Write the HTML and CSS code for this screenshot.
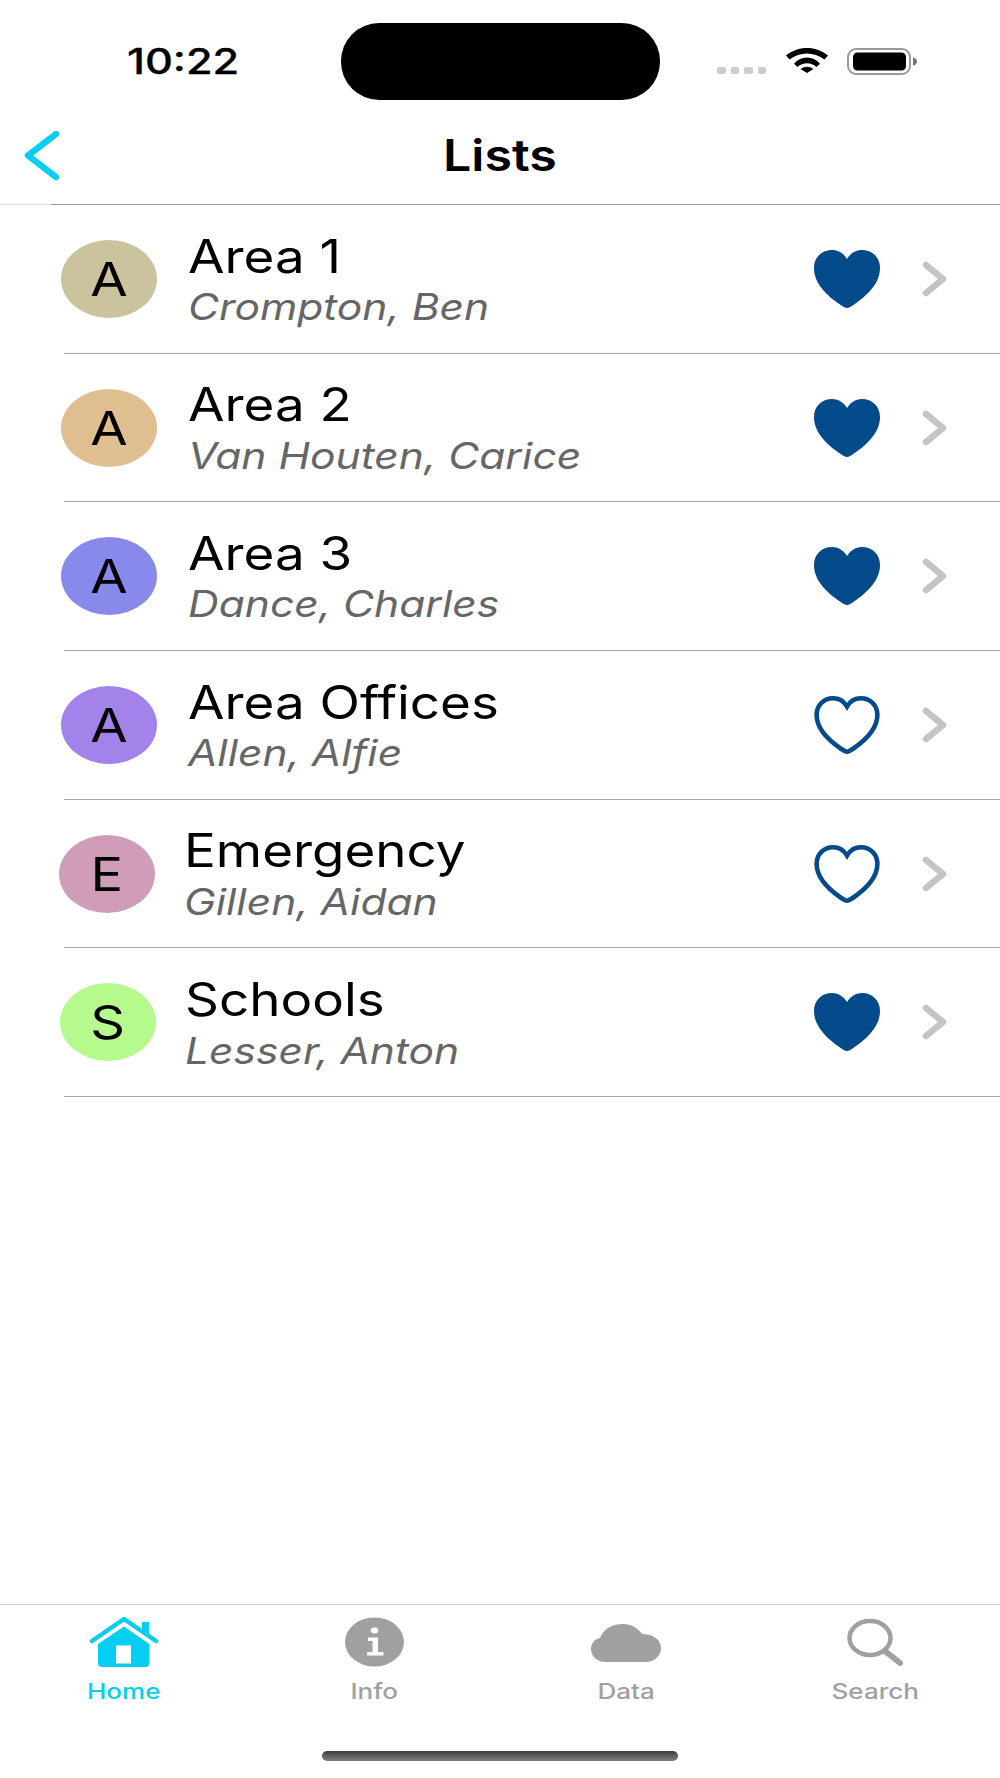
FILE: index.html
```html
<!DOCTYPE html>
<html lang="en">
<head>
<meta charset="utf-8">
<title>Lists</title>
<link rel="stylesheet" href="styles.css">
</head>
<body>
<div class="phone">
  <header class="status">
    <span class="time">10:22</span>
    <div class="island"></div>
    <div class="dots"><i></i><i></i><i></i><i></i></div>
    <svg class="wifi" width="42" height="25" viewBox="0 0 42 25"><path d="M0 7.6C12-2.5 30-2.5 42 7.6L38.5 11.5C28 3.5 14 3.5 3.5 11.5Z"/><path d="M8 15.7C15 7.5 27 7.5 34 15.7L30.5 19C25 14 17 14 11.5 19Z"/><path d="M14.5 21Q21 16.5 27.5 21L21 25Z"/></svg>
    <svg class="battery" width="71" height="27" viewBox="0 0 71 27"><rect x="1" y="1" width="62" height="25" rx="8" fill="#fff" stroke="#9a9a9a" stroke-width="2"/><rect x="6" y="4.5" width="53" height="18" rx="4.5"/><path d="M66 9.5C69 10 70 12 70 13.5C70 15 69 17 66 17.5Z" fill="#777"/></svg>
  </header>
  <nav class="nav">
    <svg class="back" width="36" height="50" viewBox="0 0 36 50"><path d="M32 3L4 24.500L32 46"/></svg>
    <h1 class="nav-title"><span>Lists</span></h1>
  </nav>
  <main class="list">
    <div class="sep sep-top"></div>
    <div class="row">
      <div class="avatar c1"><span>A</span></div>
      <div class="text"><div class="name"><span>Area 1</span></div><div class="person"><span>Crompton, Ben</span></div></div>
      <svg class="heart" width="66" height="58" viewBox="0 0 66 58"><path class="solid" d="M33 58C31 58 29 56.5 26 54.5C12 45 0 33 0 18C0 7 8 0 18 0C25 0 30 4 33 9C36 4 41 0 48 0C58 0 66 7 66 18C66 33 54 45 40 54.5C37 56.5 35 58 33 58Z"/></svg>
      <svg class="chev" width="27" height="36" viewBox="0 0 27 36"><path d="M6 4L23 18L6 32"/></svg>
    </div>
    <div class="sep"></div>
    <div class="row">
      <div class="avatar c2"><span>A</span></div>
      <div class="text"><div class="name"><span>Area 2</span></div><div class="person"><span>Van Houten, Carice</span></div></div>
      <svg class="heart" width="66" height="58" viewBox="0 0 66 58"><path class="solid" d="M33 58C31 58 29 56.5 26 54.5C12 45 0 33 0 18C0 7 8 0 18 0C25 0 30 4 33 9C36 4 41 0 48 0C58 0 66 7 66 18C66 33 54 45 40 54.5C37 56.5 35 58 33 58Z"/></svg>
      <svg class="chev" width="27" height="36" viewBox="0 0 27 36"><path d="M6 4L23 18L6 32"/></svg>
    </div>
    <div class="sep"></div>
    <div class="row">
      <div class="avatar c3"><span>A</span></div>
      <div class="text"><div class="name"><span>Area 3</span></div><div class="person"><span>Dance, Charles</span></div></div>
      <svg class="heart" width="66" height="58" viewBox="0 0 66 58"><path class="solid" d="M33 58C31 58 29 56.5 26 54.5C12 45 0 33 0 18C0 7 8 0 18 0C25 0 30 4 33 9C36 4 41 0 48 0C58 0 66 7 66 18C66 33 54 45 40 54.5C37 56.5 35 58 33 58Z"/></svg>
      <svg class="chev" width="27" height="36" viewBox="0 0 27 36"><path d="M6 4L23 18L6 32"/></svg>
    </div>
    <div class="sep"></div>
    <div class="row">
      <div class="avatar c4"><span>A</span></div>
      <div class="text"><div class="name"><span>Area Offices</span></div><div class="person"><span>Allen, Alfie</span></div></div>
      <svg class="heart" width="66" height="58" viewBox="-2.500 -2.500 71 63"><path class="outline" d="M33 58C31 58 29 56.5 26 54.5C12 45 0 33 0 18C0 7 8 0 18 0C25 0 30 4 33 9C36 4 41 0 48 0C58 0 66 7 66 18C66 33 54 45 40 54.5C37 56.5 35 58 33 58Z"/></svg>
      <svg class="chev" width="27" height="36" viewBox="0 0 27 36"><path d="M6 4L23 18L6 32"/></svg>
    </div>
    <div class="sep"></div>
    <div class="row row-e">
      <div class="avatar c5"><span>E</span></div>
      <div class="text"><div class="name"><span>Emergency</span></div><div class="person"><span>Gillen, Aidan</span></div></div>
      <svg class="heart" width="66" height="58" viewBox="-2.500 -2.500 71 63"><path class="outline" d="M33 58C31 58 29 56.5 26 54.5C12 45 0 33 0 18C0 7 8 0 18 0C25 0 30 4 33 9C36 4 41 0 48 0C58 0 66 7 66 18C66 33 54 45 40 54.5C37 56.5 35 58 33 58Z"/></svg>
      <svg class="chev" width="27" height="36" viewBox="0 0 27 36"><path d="M6 4L23 18L6 32"/></svg>
    </div>
    <div class="sep"></div>
    <div class="row row-s">
      <div class="avatar c6"><span>S</span></div>
      <div class="text"><div class="name"><span>Schools</span></div><div class="person"><span>Lesser, Anton</span></div></div>
      <svg class="heart" width="66" height="58" viewBox="0 0 66 58"><path class="solid" d="M33 58C31 58 29 56.5 26 54.5C12 45 0 33 0 18C0 7 8 0 18 0C25 0 30 4 33 9C36 4 41 0 48 0C58 0 66 7 66 18C66 33 54 45 40 54.5C37 56.5 35 58 33 58Z"/></svg>
      <svg class="chev" width="27" height="36" viewBox="0 0 27 36"><path d="M6 4L23 18L6 32"/></svg>
    </div>
    <div class="sep"></div>
  </main>
  <footer class="tabs">
    <div class="tab tab-active">
      <svg class="ic" width="70" height="50" viewBox="0 0 70 50"><path d="M53 5H60V18L53 13Z" fill="#06cdf2"/><path d="M3 24L35 2L67 24" fill="none" stroke="#06cdf2" stroke-width="4.5" stroke-linecap="round" stroke-linejoin="round"/><path d="M35 9.5L60.5 27V46C60.5 48.5 59 50 56.5 50H13C10.500 50 9 48.500 9 46V27Z" fill="#06cdf2"/><rect x="27" y="28.500" width="15" height="18" fill="#fff"/></svg>
      <span class="label"><span>Home</span></span>
    </div>
    <div class="tab">
      <svg class="ic" width="59" height="50" viewBox="0 0 59 50"><ellipse cx="29.500" cy="25" rx="29.500" ry="24.500" fill="#a0a0a0"/><ellipse cx="29.500" cy="13.500" rx="3.800" ry="3" fill="#fff"/><path d="M23 20.500H33V35H38.500V38.500H22V35H27.500V24H23Z" fill="#fff"/></svg>
      <span class="label"><span>Info</span></span>
    </div>
    <div class="tab">
      <svg class="ic" width="70" height="50" viewBox="0 0 70 50"><path d="M14 45C6 45 0 39 0 32C0 26 4 22 9 21C12 13 20 7 32 7C40 7 47 11 51 17C61 17 70 22 70 31C70 39 63 45 55 45Z" fill="#a0a0a0"/></svg>
      <span class="label"><span>Data</span></span>
    </div>
    <div class="tab">
      <svg class="ic" width="56" height="50" viewBox="0 0 56 50"><ellipse cx="23" cy="21" rx="20.500" ry="17" fill="none" stroke="#a0a0a0" stroke-width="4.500"/><path d="M38 34L53 46" fill="none" stroke="#a0a0a0" stroke-width="6" stroke-linecap="round"/></svg>
      <span class="label"><span>Search</span></span>
    </div>
  </footer>
  <div class="home-bar"><div class="home-indicator"></div></div>
</div>
</body>
</html>
```
FILE: styles.css
```css
* { box-sizing: border-box; }
html, body { margin: 0; padding: 0; background: #fff; }
body { font-family: Inter, "Liberation Sans", sans-serif; color: #000; }
.phone { width: 1000px; height: 1778px; display: flex; flex-direction: column; overflow: hidden; }

.status { height: 121px; display: flex; align-items: flex-start; padding: 23px 0 0 127px; }
.time { flex: none; width: 214px; margin-top: 20px; font-size: 35px; line-height: 36px; font-weight: 500; -webkit-text-stroke: 0.3px #000; transform: scaleX(1.235); transform-origin: left center; }
.island { width: 319px; height: 77px; background: #000; border-radius: 38px; flex: none; }
.dots { display: flex; gap: 5px; margin: 44px 0 0 57px; }
.dots i { width: 8.500px; height: 7px; background: #cdcdcd; border-radius: 2px; display: block; }
.wifi { fill: #000; margin: 25px 0 0 20px; flex: none; }
.battery { margin: 25px 0 0 19px; flex: none; }

.nav { height: 83px; position: relative; display: flex; align-items: center; justify-content: center; }
.back { position: absolute; left: 24px; top: 10px; fill: none; stroke: #06cdf2; stroke-width: 6.500; stroke-linecap: round; stroke-linejoin: round; }
.nav-title { margin: -16px 0 0; font-size: 44px; line-height: 50px; font-weight: 600; transform: scaleX(1.14); }

.list { display: flex; flex-direction: column; }
.sep { height: 1px; margin-left: 64px; background: #a8a8a8; flex: none; }
.sep-top { margin-left: 0; background: linear-gradient(to right, #dcdcdc 51px, #9a9a9a 51px); }
.row { height: 147.700px; display: flex; align-items: center; padding-left: 61px; flex: none; }
.row-e { padding-left: 59px; }
.row-s { padding-left: 60px; }

.avatar { width: 96px; height: 78px; border-radius: 50%; flex: none; display: flex; align-items: center; justify-content: center; font-size: 46px; line-height: 1; }
.avatar span { display: block; transform: scaleX(1.18); }
.c1 { background: #cbc39e; }
.c2 { background: #dfbf8f; }
.c3 { background: #8789eb; }
.c4 { background: #a383ea; }
.c5 { background: #cf9db8; }
.c6 { background: #b6f98c; }

.text { flex: 1; margin-left: 31px; padding-top: 1px; display: flex; flex-direction: column; }
.row-e .text, .row-s .text { margin-left: 29px; }
.name { font-size: 46px; line-height: 52px; height: 52px; white-space: nowrap; }
.person { font-size: 37px; line-height: 44px; height: 44px; margin-top: 3.500px; color: #666; font-style: italic; white-space: nowrap; }
.name span, .person span { display: inline-block; transform-origin: left center; transform: scaleX(1.15); }

.heart { flex: none; margin-right: 40px; }
.solid { fill: #034a8a; }
.outline { fill: none; stroke: #034a8a; stroke-width: 5; }
.chev { flex: none; margin-right: 53px; fill: none; stroke: #c4c4c4; stroke-width: 6.500; stroke-linecap: round; stroke-linejoin: round; }

.tabs { margin-top: auto; height: 114px; border-top: 1px solid #cdcdcd; display: grid; grid-template-columns: 248px 252px 252px 246px; justify-items: center; padding-top: 12px; }
.tab { display: flex; flex-direction: column; align-items: center; color: #a0a0a0; }
.tab-active { color: #06cdf2; }
.ic { display: block; }
.label { display: block; margin-top: 12px; font-size: 21px; line-height: 26px; font-weight: 500; }
.label span { display: block; transform: scaleX(1.24); }

.home-bar { height: 60px; display: flex; justify-content: center; padding-top: 33px; }
.home-indicator { width: 356px; height: 10px; border-radius: 5px; background: linear-gradient(#3d3d3d, #808080); }
```
